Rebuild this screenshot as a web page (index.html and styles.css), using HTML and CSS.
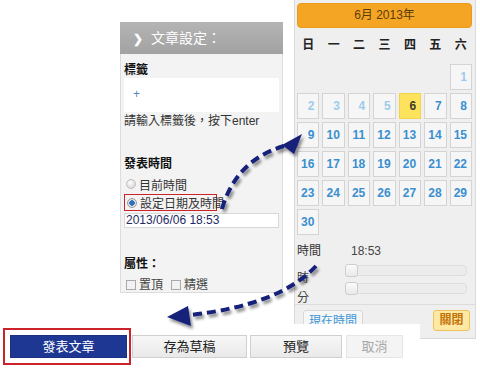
FILE: index.html
```html
<!DOCTYPE html>
<html lang="zh-Hant">
<head>
<meta charset="utf-8">
<link rel="stylesheet" href="styles.css">
</head>
<body>
<div class="canvas">
  <section class="settings">
    <div class="settings-head"><span class="chev">❯</span>文章設定：</div>
    <div class="settings-body">
      <div class="label">標籤</div>
      <div class="tag-box"><span class="plus">+</span></div>
      <div class="hint">請輸入標籤後，按下enter</div>
      <div class="label label-time">發表時間</div>
      <div class="radio-row"><span class="radio"></span>目前時間</div>
      <div class="radio-row picked"><span class="radio on"></span>設定日期及時間</div>
      <div class="date-input">2013/06/06 18:53</div>
      <div class="label label-attr">屬性：</div>
      <div class="checks">
        <span class="check-item"><span class="checkbox"></span>置頂</span>
        <span class="check-item"><span class="checkbox"></span>精選</span>
      </div>
    </div>
  </section>

  <section class="calendar">
    <div class="cal-head">6月 2013年</div>
    <div class="weekdays">
      <span>日</span><span>一</span><span>二</span><span>三</span><span>四</span><span>五</span><span>六</span>
    </div>
    <div class="days">
      <span class="blank"></span><span class="blank"></span><span class="blank"></span><span class="blank"></span><span class="blank"></span><span class="blank"></span>
      <span class="day off">1</span>
      <span class="day off">2</span><span class="day off">3</span><span class="day off">4</span><span class="day off">5</span><span class="day today">6</span><span class="day">7</span><span class="day">8</span>
      <span class="day">9</span><span class="day">10</span><span class="day">11</span><span class="day">12</span><span class="day">13</span><span class="day">14</span><span class="day">15</span>
      <span class="day">16</span><span class="day">17</span><span class="day">18</span><span class="day">19</span><span class="day">20</span><span class="day">21</span><span class="day">22</span>
      <span class="day">23</span><span class="day">24</span><span class="day">25</span><span class="day">26</span><span class="day">27</span><span class="day">28</span><span class="day">29</span>
      <span class="day">30</span>
    </div>
    <div class="time-row"><span class="time-label">時間</span><span class="time-val">18:53</span></div>
    <div class="sliders">
      <div class="slider-labels"><span>時</span><span>分</span></div>
      <div class="slider-tracks">
        <div class="track"><span class="handle"></span></div>
        <div class="track"><span class="handle"></span></div>
      </div>
    </div>
    <div class="cal-buttons">
      <span class="btn-now">現在時間</span>
      <span class="btn-close">關閉</span>
    </div>
  </section>

  <div class="actions">
    <div class="highlight"><span class="btn btn-primary">發表文章</span></div>
    <span class="btn btn-draft">存為草稿</span>
    <span class="btn btn-preview">預覽</span>
    <span class="btn btn-cancel">取消</span>
  </div>

  <svg class="arrows" width="480" height="372" viewBox="0 0 480 372">
    <defs>
      <filter id="sh" x="-20%" y="-20%" width="140%" height="140%">
        <feGaussianBlur in="SourceAlpha" stdDeviation="1.5"/>
        <feOffset dx="2" dy="3" result="b"/>
        <feComponentTransfer><feFuncA type="linear" slope="0.45"/></feComponentTransfer>
        <feMerge><feMergeNode/><feMergeNode in="SourceGraphic"/></feMerge>
      </filter>
    </defs>
    <g filter="url(#sh)">
      <path d="M222 209 Q236 160 284 146" fill="none" stroke="#16207a" stroke-width="4" stroke-dasharray="9 5"/>
      <polygon points="302,134 282,145 294,154" fill="#16207a"/>
      <path d="M316 266 Q280 305 190 315" fill="none" stroke="#16207a" stroke-width="4" stroke-dasharray="9 5"/>
      <polygon points="167,317 188,306 191,326" fill="#16207a"/>
    </g>
  </svg>
</div>
</body>
</html>
```
FILE: styles.css
```css
* { box-sizing: border-box; }
html, body { margin: 0; padding: 0; background: #fff; }
body {
  font-family: "Liberation Sans", "Noto Sans CJK TC", sans-serif;
  font-size: 12px;
  color: #333;
}
.canvas {
  position: relative;
  width: 480px;
  height: 372px;
  overflow: hidden;
  background: #fff;
}

/* ---------- settings panel ---------- */
.settings {
  position: absolute;
  left: 120px;
  top: 22px;
  width: 163px;
  height: 271px;
  background: #f3f3f3;
  border: 1px solid #dcdcdc;
  border-top: none;
}
.settings-head {
  height: 32px;
  background: linear-gradient(#b4b4b4, #a2a2a2);
  color: #fff;
  font-size: 14px;
  line-height: 32px;
  padding-left: 13px;
  margin: 0 -1px;
}
.chev { font-size: 12px; margin-right: 8px; font-weight: bold; }
.settings-body { padding: 8px 3px 0 3px; }
.label { font-weight: bold; color: #111; line-height: 16px; height: 16px; }
.tag-box {
  margin-top: 0;
  height: 34px;
  background: #fff;
  padding-left: 9px;
  line-height: 32px;
  width: 155px;
}
.plus { color: #5a82c2; font-size: 12px; }
.hint { margin-top: 1px; line-height: 16px; color: #333; white-space: nowrap; }
.label-time { margin-top: 27px; }
.radio-row {
  display: flex;
  align-items: center;
  height: 18px;
  margin-top: 3px;
  color: #333;
  white-space: nowrap;
}
.radio-row.picked {
  width: 93px;
  height: 17px;
  margin-top: 1px;
  border: 1.5px solid #cc2229;
}
.radio {
  width: 10px;
  height: 10px;
  border-radius: 50%;
  background: radial-gradient(circle at 40% 35%, #fdfdfd, #cfcfcf);
  border: 1px solid #bdbdbd;
  margin: 0 3px 0 2px;
  flex: none;
}
.radio.on {
  background: radial-gradient(circle, #2f6fc0 0 2.5px, #eaeaea 3px, #c8c8c8);
  border-color: #9a9a9a;
}
.date-input {
  margin-top: 2px;
  width: 155px;
  height: 15px;
  background: #fff;
  border: 1px solid #d8d8d8;
  color: #1e2a66;
  line-height: 13px;
  padding-left: 1px;
}
.label-attr { margin-top: 28px; }
.checks { display: flex; gap: 6px; margin-top: 5px; line-height: 16px; color: #444; }
.check-item { display: flex; align-items: center; }
.checkbox {
  width: 10px;
  height: 10px;
  border: 1px solid #aaa;
  background: #f2f2f2;
  margin: 0 3px 0 2px;
}

/* ---------- calendar ---------- */
.calendar {
  position: absolute;
  left: 294px;
  top: -1px;
  width: 182px;
  height: 340px;
  background: #efefef;
  border: 1px solid #dadada;
  padding: 3px 3px 0 2px;
}
.cal-head {
  height: 25px;
  background: #f5a524;
  border: 1px solid #eb9b1a;
  border-radius: 4px;
  color: #5b3b0c;
  text-align: center;
  line-height: 23px;
  font-size: 12px;
}
.weekdays {
  display: grid;
  grid-template-columns: repeat(7, 1fr);
  column-gap: 3px;
  margin-top: 8px;
  height: 18px;
  line-height: 18px;
  text-align: center;
  font-weight: bold;
  color: #222;
}
.days {
  display: grid;
  grid-template-columns: repeat(7, 1fr);
  grid-auto-rows: 26px;
  gap: 3px 3px;
  margin-top: 10px;
}
.day {
  background: #f6f6f6;
  border: 1px solid #d4d4d4;
  color: #3a8fd0;
  font-weight: bold;
  text-align: right;
  padding-right: 4px;
  line-height: 24px;
}
.day.off { color: #9fcbea; }
.day.today { background: #fde25c; border-color: #f2d34a; color: #3d3a2a; }
.time-row { display: flex; margin-top: 8px; line-height: 16px; color: #333; }
.time-label { width: 54px; }
.time-val { color: #444; }
.sliders { display: flex; height: 45px; }
.slider-labels {
  width: 48px;
  display: flex;
  flex-direction: column;
  padding-top: 9px;
  line-height: 20px;
  color: #444;
}
.slider-tracks { padding-top: 5px; display: flex; flex-direction: column; gap: 5px; }
.track {
  position: relative;
  width: 122px;
  height: 13px;
  display: flex;
  align-items: center;
}
.track::before {
  content: "";
  display: block;
  width: 100%;
  height: 9px;
  background: #ececec;
  border: 1px solid #dedede;
  border-radius: 4px;
}
.handle {
  position: absolute;
  left: 0;
  top: 0;
  width: 13px;
  height: 13px;
  border-radius: 3px;
  border: 1px solid #cdcdcd;
  background: linear-gradient(#fbfbfb, #e9e9e9);
}
.cal-buttons {
  border-top: 1px solid #dcdcdc;
  margin-left: -2px;
  margin-right: -3px;
  padding: 5px 5px 0 8px;
  display: flex;
  justify-content: space-between;
  align-items: flex-start;
}
.btn-now {
  height: 22px;
  padding: 0 5px;
  border: 1px solid #d8d8d8;
  border-radius: 3px;
  background: #f7f7f7;
  color: #3f97d6;
  line-height: 20px;
}
.btn-close {
  height: 21px;
  width: 37px;
  text-align: center;
  border: 1px solid #f0c25c;
  border-radius: 3px;
  background: #fde8a4;
  color: #c27408;
  font-weight: bold;
  line-height: 19px;
}

/* ---------- bottom actions ---------- */
.actions {
  position: absolute;
  left: 0;
  top: 324px;
  width: 420px;
  height: 48px;
  background: #fff;
  display: flex;
  align-items: center;
  padding: 0 0 3px 3px;
}
.highlight {
  border: 2px solid #cc2229;
  padding: 5px 2px 5px 5px;
  display: flex;
}
.btn {
  height: 23px;
  line-height: 21px;
  text-align: center;
  font-size: 13px;
  border: 1px solid #cfcfcf;
  background: linear-gradient(#f7f7f7, #e9e9e9);
  color: #222;
}
.btn-primary {
  width: 117px;
  background: #1e3792;
  border-color: #1b3080;
  color: #fff;
}
.btn-draft { width: 115px; margin-left: 1px; }
.btn-preview { width: 92px; margin-left: 3px; }
.btn-cancel {
  width: 57px;
  margin-left: 4px;
  background: #f4f4f4;
  border-color: #e6e6e6;
  color: #a8a8a8;
}

.arrows {
  position: absolute;
  left: 0;
  top: 0;
  pointer-events: none;
}
```
